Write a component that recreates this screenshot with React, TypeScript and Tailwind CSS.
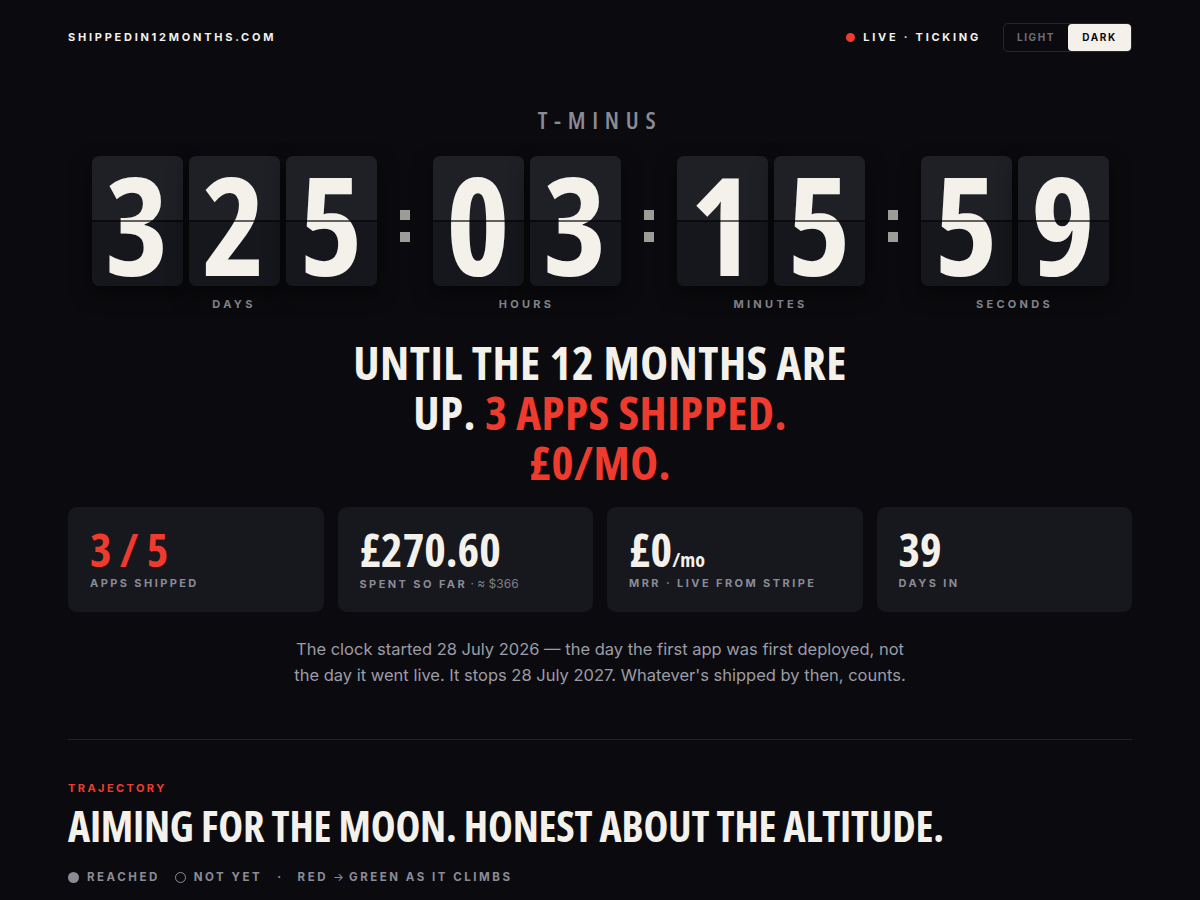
import React from 'react'

const DISPLAY = "font-['Open_Sans',sans-serif] font-stretch-[75%]"

const GROUPS = [
  { label: 'Days', digits: ['3', '2', '5'] },
  { label: 'Hours', digits: ['0', '3'] },
  { label: 'Minutes', digits: ['1', '5'] },
  { label: 'Seconds', digits: ['5', '9'] },
]

const STATS = [
  { value: '3 / 5', red: true, label: 'Apps shipped' },
  { value: '£270.60', label: 'Spent so far', extra: '· ≈ $366' },
  { value: '£0', unit: '/mo', label: 'MRR · Live from Stripe' },
  { value: '39', label: 'Days in' },
]

function FlipDigit({ d }: { d: string }) {
  return (
    <div className="relative w-[91px] h-[130px] rounded-[7px] overflow-hidden bg-gradient-to-b from-[#1f2026] from-50% to-[#16171c] to-50% shadow-[0_8px_20px_rgba(0,0,0,0.5)] flex items-center justify-center">
      <span className={`${DISPLAY} font-bold text-[136px] leading-none text-[#f3f1ea] translate-y-[3px]`}>{d}</span>
      <div className="absolute left-0 right-0 top-[64px] h-[2px] bg-black/60" />
    </div>
  )
}

function Colon() {
  return (
    <div className="flex flex-col gap-[12px] w-[56px] items-center pt-[10px]">
      <div className="w-[10px] h-[10px] bg-[#9d9c97]" />
      <div className="w-[10px] h-[10px] bg-[#9d9c97]" />
    </div>
  )
}

export default function App() {
  return (
    <div className="min-h-screen bg-[#0b0b0f] text-[#f3f1ea] font-['Inter',sans-serif]">
      <div className="mx-auto max-w-[1064px]">
        {/* Header */}
        <header className="flex items-center justify-between h-[74px]">
          <div className="text-[11px] font-bold tracking-[0.25em] text-[#f3f1ea]">SHIPPEDIN12MONTHS.COM</div>
          <div className="flex items-center gap-[22px]">
            <div className="flex items-center gap-[8px] text-[11px] font-bold tracking-[0.25em]">
              <span className="w-[9px] h-[9px] rounded-full bg-[#ef3b2d]" />
              LIVE · TICKING
            </div>
            <div className="flex items-center rounded-[5px] border border-[#26262c] text-[10px] font-bold tracking-[0.16em]">
              <button className="w-[64px] h-[27px] text-[#6e6e78]">LIGHT</button>
              <button className="w-[63px] h-[27px] rounded-[4px] bg-[#f3f1ea] text-[#0b0b0f]">DARK</button>
            </div>
          </div>
        </header>

        {/* Countdown */}
        <div className={`${DISPLAY} text-center text-[24px] font-semibold tracking-[0.28em] text-[#8b8b96] mt-[34px] leading-none`}>T-MINUS</div>

        <div className="flex justify-center mt-[24px]">
          {GROUPS.map((g, i) => (
            <React.Fragment key={g.label}>
              {i > 0 && <div className="h-[130px] flex items-center"><Colon /></div>}
              <div className="flex flex-col items-center">
                <div className="flex gap-[6px]">
                  {g.digits.map((d, j) => <FlipDigit key={j} d={d} />)}
                </div>
                <div className="mt-[10px] text-[11px] font-bold tracking-[0.3em] text-[#8b8b93] uppercase">{g.label}</div>
              </div>
            </React.Fragment>
          ))}
        </div>

        {/* Headline */}
        <h1 className={`${DISPLAY} mt-[24px] text-center font-bold uppercase text-[47px] leading-[50px] tracking-[0.01em] max-w-[508px] mx-auto`}>
          Until the 12 months are up. <span className="text-[#ef3b2d]">3 apps shipped. £0/mo.</span>
        </h1>

        {/* Stats */}
        <div className="mt-[20px] grid grid-cols-4 gap-[14px]">
          {STATS.map(s => (
            <div key={s.label} className="h-[105px] rounded-[9px] bg-[#17171e] px-[22px] pt-[20px]">
              <div className={`${DISPLAY} font-bold text-[46px] leading-[44px] ${s.red ? 'text-[#ef3b2d]' : 'text-[#f3f1ea]'}`}>
                {s.value}
                {s.unit && <span className="text-[20px] leading-none">{s.unit}</span>}
              </div>
              <div className="mt-[4px] text-[11px] font-bold tracking-[0.22em] uppercase text-[#8b8b96]">
                {s.label}
                {s.extra && <span className="font-normal tracking-normal text-[12px] text-[#7e7e88]"> {s.extra}</span>}
              </div>
            </div>
          ))}
        </div>

        <p className="mt-[24px] mx-auto max-w-[620px] text-center text-[16.5px] leading-[26px] text-[#9c9ca6]">
          The clock started 28 July 2026 — the day the first app was first deployed, not the day it went live. It stops 28 July 2027. Whatever's shipped by then, counts.
        </p>

        <div className="mt-[51px] h-px bg-[#222228]" />

        {/* Trajectory */}
        <div className="mt-[40px] text-[11px] font-bold tracking-[0.22em] text-[#ef3b2d]">TRAJECTORY</div>
        <h2 className={`${DISPLAY} mt-[4px] font-bold uppercase text-[42px] leading-[52px] tracking-[-0.005em]`}>
          Aiming for the moon. Honest about the altitude.
        </h2>
        <div className="mt-[17px] flex items-center text-[11.5px] font-bold tracking-[0.22em] text-[#8b8b96]">
          <span className="w-[11px] h-[11px] rounded-full bg-[#8b8b96] mr-[8px]" />
          <span>REACHED</span>
          <span className="ml-[15px] w-[11px] h-[11px] rounded-full border border-[#8b8b96] mr-[8px]" />
          <span>NOT YET</span>
          <span className="ml-[15px] mr-[14px]">·</span>
          <span>RED</span>
          <span className="font-normal tracking-normal mx-[5px]">→</span>
          <span>GREEN AS IT CLIMBS</span>
        </div>
        <div className="h-[40px]" />
      </div>
    </div>
  )
}
